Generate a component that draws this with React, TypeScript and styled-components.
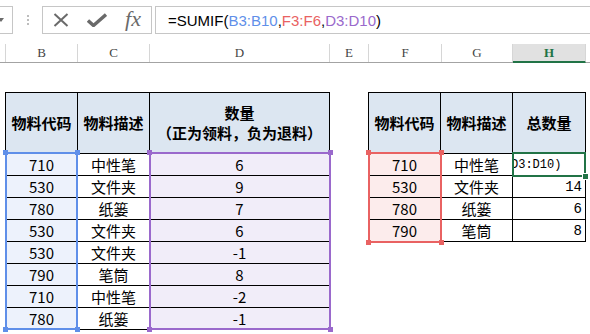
import React from "react";
import styled, { createGlobalStyle } from "styled-components";

const GlobalStyle = createGlobalStyle`
  html, body {
    margin: 0;
    padding: 0;
    background: #ffffff;
    overflow: hidden;
  }
  body {
    font-family: "Noto Sans CJK SC", "Noto Sans", sans-serif;
  }
`;

type Tone = "plain" | "blue" | "purple" | "red";

const fills: Record<Tone, string> = {
  plain: "#ffffff",
  blue: "#edf2fc",
  purple: "#f1edf9",
  red: "#fcecec",
};

const strokes = {
  blue: "#5f8fe9",
  purple: "#9a69cc",
  red: "#e96262",
  green: "#217346",
};

const leftRows = [
  ["710", "中性笔", "6"],
  ["530", "文件夹", "9"],
  ["780", "纸篓", "7"],
  ["530", "文件夹", "6"],
  ["530", "文件夹", "-1"],
  ["790", "笔筒", "8"],
  ["710", "中性笔", "-2"],
  ["780", "纸篓", "-1"],
];

const rightRows = [
  ["710", "中性笔", ""],
  ["530", "文件夹", "14"],
  ["780", "纸篓", "6"],
  ["790", "笔筒", "8"],
];

const columns = [
  { name: "", width: 6 },
  { name: "B", width: 72 },
  { name: "C", width: 72 },
  { name: "D", width: 180 },
  { name: "E", width: 39 },
  { name: "F", width: 73 },
  { name: "G", width: 71 },
  { name: "H", width: 73, active: true },
];

// the cell in edit mode only shows the tail of the formula
const EDIT_TAIL = "D3:D10)";

export default function App() {
  return (
    <Page>
      <GlobalStyle />

      <FormulaBar>
        <NameBox>
          <DropArrow />
        </NameBox>
        <Grip>
          <GripDot />
          <GripDot />
          <GripDot />
        </Grip>
        <ButtonsBox>
          <IconSlot>
            <svg width="16" height="14" viewBox="0 0 16 14">
              <path d="M1.5 1 L14.5 13 M14.5 1 L1.5 13" stroke="#6a6a6a" strokeWidth="2" fill="none" />
            </svg>
          </IconSlot>
          <IconSlot>
            <svg width="20" height="14" viewBox="0 0 20 14">
              <path d="M1 7.5 L6.5 12.5 L19 1.5" stroke="#6a6a6a" strokeWidth="3.4" fill="none" />
            </svg>
          </IconSlot>
          <IconSlot>
            <FxText>fx</FxText>
          </IconSlot>
        </ButtonsBox>
        <FormulaBox>
          <Ref>=SUMIF(</Ref>
          <Ref $color={strokes.blue}>B3:B10</Ref>
          <Ref>,</Ref>
          <Ref $color={strokes.red}>F3:F6</Ref>
          <Ref>,</Ref>
          <Ref $color={strokes.purple}>D3:D10</Ref>
          <Ref>)</Ref>
        </FormulaBox>
      </FormulaBar>

      <ColumnHeaders>
        {columns.map((c, i) => (
          <ColumnHead key={i} $width={c.width} $active={c.active}>
            {c.name}
          </ColumnHead>
        ))}
        <ColumnRest />
      </ColumnHeaders>

      <Sheet>
        <Table $cols="72px 72px 180px" $rows={8}>
          <HeadCell>物料代码</HeadCell>
          <HeadCell>物料描述</HeadCell>
          <HeadCell>
            <span>数量</span>
            <span>（正为领料，负为退料）</span>
          </HeadCell>
          {leftRows.map((r, i) => (
            <React.Fragment key={i}>
              <Cell $tone="blue">{r[0]}</Cell>
              <Cell>{r[1]}</Cell>
              <Cell $tone="purple">{r[2]}</Cell>
            </React.Fragment>
          ))}

          <Selection $color={strokes.blue} $left={-1} $top={59} $w={73} $h={178}>
            <Handle $color={strokes.blue} $x="left" $y="top" />
            <Handle $color={strokes.blue} $x="right" $y="top" />
            <Handle $color={strokes.blue} $x="left" $y="bottom" />
            <Handle $color={strokes.blue} $x="right" $y="bottom" />
          </Selection>
          <Selection $color={strokes.purple} $left={143} $top={59} $w={182} $h={178}>
            <Handle $color={strokes.purple} $x="left" $y="top" />
            <Handle $color={strokes.purple} $x="right" $y="top" />
            <Handle $color={strokes.purple} $x="left" $y="bottom" />
            <Handle $color={strokes.purple} $x="right" $y="bottom" />
          </Selection>
        </Table>

        <Table $cols="72px 72px 73px" $rows={4}>
          <HeadCell>物料代码</HeadCell>
          <HeadCell>物料描述</HeadCell>
          <HeadCell>总数量</HeadCell>
          {rightRows.map((r, i) => (
            <React.Fragment key={i}>
              <Cell $tone="red">{r[0]}</Cell>
              <Cell>{r[1]}</Cell>
              {i === 0 ? (
                <EditCell>
                  <EditText>{EDIT_TAIL}</EditText>
                </EditCell>
              ) : (
                <NumberCell>{r[2]}</NumberCell>
              )}
            </React.Fragment>
          ))}

          <Selection $color={strokes.red} $left={-1} $top={59} $w={74} $h={91}>
            <Handle $color={strokes.red} $x="left" $y="top" />
            <Handle $color={strokes.red} $x="right" $y="top" />
            <Handle $color={strokes.red} $x="left" $y="bottom" />
            <Handle $color={strokes.red} $x="right" $y="bottom" />
          </Selection>
          <Selection $color={strokes.green} $left={143} $top={59} $w={74} $h={25}>
            <Handle $color={strokes.green} $x="right" $y="bottom" $ring />
          </Selection>
        </Table>
      </Sheet>
    </Page>
  );
}

const Page = styled.div`
  width: 590px;
  height: 334px;
  overflow: hidden;
  background: #ffffff;
`;

/* formula bar */

const FormulaBar = styled.div`
  display: flex;
  align-items: stretch;
  height: 28px;
  padding-top: 6px;
  margin-bottom: 10px;
`;

const NameBox = styled.div`
  box-sizing: border-box;
  width: 23px;
  margin-left: -10px;
  border: 1px solid #c6c6c6;
  display: flex;
  align-items: center;
  padding-left: 7px;
`;

const DropArrow = styled.span`
  width: 0;
  height: 0;
  border-left: 3.5px solid transparent;
  border-right: 3.5px solid transparent;
  border-top: 4px solid #6b6b6b;
`;

const Grip = styled.div`
  width: 29px;
  display: flex;
  flex-direction: column;
  align-items: center;
  justify-content: center;
  gap: 2px;
`;

const GripDot = styled.span`
  width: 2px;
  height: 2px;
  background: #bdbdbd;
`;

const ButtonsBox = styled.div`
  box-sizing: border-box;
  width: 110px;
  border: 1px solid #c6c6c6;
  display: grid;
  grid-template-columns: 36px 36px 36px;
  align-items: center;
`;

const IconSlot = styled.div`
  display: flex;
  align-items: center;
  justify-content: center;
`;

const FxText = styled.span`
  font-family: "Liberation Serif", "DejaVu Serif", serif;
  font-style: italic;
  font-size: 22px;
  line-height: 1;
  color: #6a6a6a;
  margin-top: -2px;
`;

const FormulaBox = styled.div`
  flex: 1;
  margin-left: 3px;
  margin-right: -10px;
  border: 1px solid #c6c6c6;
  display: flex;
  align-items: center;
  padding-left: 12px;
  font-family: "Liberation Sans", Arial, sans-serif;
  font-size: 15px;
  white-space: nowrap;
`;

const Ref = styled.span<{ $color?: string }>`
  color: ${(p) => p.$color || "#000000"};
`;

/* column headers */

const ColumnHeaders = styled.div`
  display: flex;
  height: 18px;
  border-bottom: 1px solid #a3a3a3;
`;

const ColumnHead = styled.div<{ $width: number; $active?: boolean }>`
  box-sizing: border-box;
  flex: 0 0 ${(p) => p.$width}px;
  border-right: 1px solid #d6d6d6;
  display: flex;
  align-items: center;
  justify-content: center;
  font-family: "Liberation Serif", "DejaVu Serif", serif;
  font-size: 13px;
  color: ${(p) => (p.$active ? "#217346" : "#444444")};
  font-weight: ${(p) => (p.$active ? 700 : 400)};
  background: ${(p) => (p.$active ? "#e1e1e1" : "transparent")};
  border-bottom: ${(p) => (p.$active ? "2px solid #217346" : "none")};
  margin-bottom: ${(p) => (p.$active ? "-1px" : "0")};
`;

const ColumnRest = styled.div`
  flex: 1;
`;

/* sheet */

const Sheet = styled.div`
  display: flex;
  align-items: flex-start;
  gap: 38px;
  padding: 29px 0 0 5px;
`;

const Table = styled.div<{ $cols: string; $rows: number }>`
  position: relative;
  display: grid;
  grid-template-columns: ${(p) => p.$cols};
  grid-template-rows: 61px repeat(${(p) => p.$rows}, 22px);
  border-left: 1px solid #000000;
  border-top: 1px solid #000000;
`;

const Cell = styled.div<{ $tone?: Tone }>`
  box-sizing: border-box;
  border-right: 1px solid #000000;
  border-bottom: 1px solid #000000;
  background: ${(p) => fills[p.$tone || "plain"]};
  display: flex;
  align-items: center;
  justify-content: center;
  font-family: "Noto Sans CJK SC", "Noto Sans", sans-serif;
  font-size: 15px;
  color: #000000;
  white-space: nowrap;
`;

const HeadCell = styled(Cell)`
  background: #dce6f1;
  flex-direction: column;
  font-weight: 700;
  line-height: 20px;
`;

const NumberCell = styled(Cell)`
  justify-content: flex-end;
  padding-right: 3px;
  font-family: "Liberation Mono", "DejaVu Sans Mono", monospace;
  font-size: 14px;
`;

const EditCell = styled(Cell)`
  justify-content: flex-start;
  overflow: hidden;
  font-family: "Liberation Mono", "DejaVu Sans Mono", monospace;
  font-size: 12px;
`;

const EditText = styled.span`
  margin-left: -2px;
`;

const Selection = styled.div<{ $color: string; $left: number; $top: number; $w: number; $h: number }>`
  position: absolute;
  box-sizing: border-box;
  left: ${(p) => p.$left}px;
  top: ${(p) => p.$top}px;
  width: ${(p) => p.$w}px;
  height: ${(p) => p.$h}px;
  border: 2px solid ${(p) => p.$color};
  pointer-events: none;
`;

const Handle = styled.span<{ $color: string; $x: "left" | "right"; $y: "top" | "bottom"; $ring?: boolean }>`
  position: absolute;
  box-sizing: border-box;
  width: ${(p) => (p.$ring ? 7 : 5)}px;
  height: ${(p) => (p.$ring ? 7 : 5)}px;
  background: ${(p) => p.$color};
  border: ${(p) => (p.$ring ? "1px solid #ffffff" : "none")};
  ${(p) => p.$x}: ${(p) => (p.$ring ? -5 : -4)}px;
  ${(p) => p.$y}: ${(p) => (p.$ring ? -5 : -4)}px;
`;
